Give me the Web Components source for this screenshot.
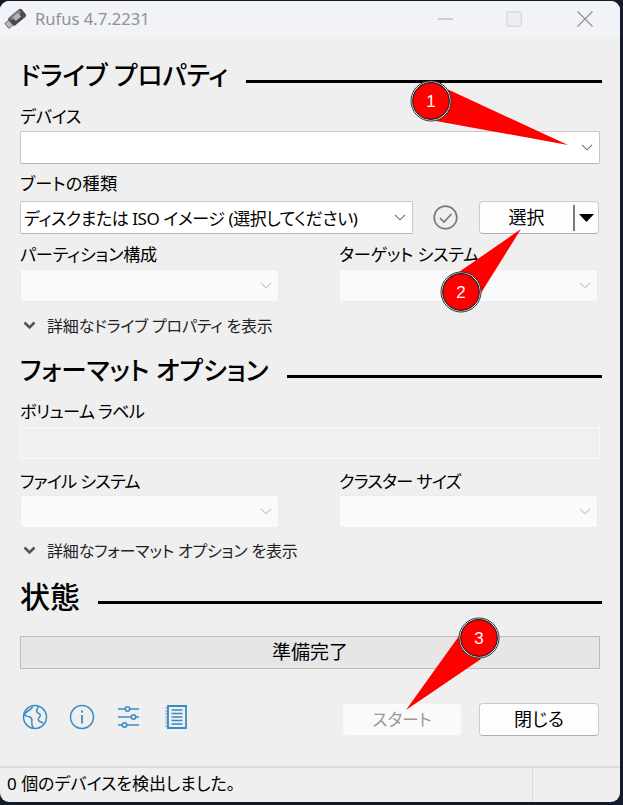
<!DOCTYPE html>
<html lang="ja">
<head>
<meta charset="utf-8">
<title>Rufus</title>
<style>
html, body { margin: 0; height: 100%; background: #141a2a; overflow: hidden; }
body { font-family: "Noto Sans", "Noto Sans CJK JP", sans-serif; font-feature-settings: "palt"; color: #000; }
</style>
</head>
<body>
<rufus-window>
  <title-bar slot="title">Rufus 4.7.2231</title-bar>

  <section-head style="--top:20px">ドライブ プロパティ</section-head>
  <field-label style="--top:10px;--gap:2px;--ls:-.4px">デバイス</field-label>
  <combo-box wide></combo-box>
  <field-label style="--top:8px;--gap:4px;--ls:.2px">ブートの種類</field-label>
  <boot-row></boot-row>
  <field-pair first="パーティション構成" second="ターゲット システム" style="--top:9px;--gap:2px;--ls:-.25px"></field-pair>
  <more-toggle style="--top:11px">詳細なドライブ プロパティ を表示</more-toggle>

  <section-head style="--top:15px">フォーマット オプション</section-head>
  <field-label style="--top:10px;--gap:0px;--ls:-.7px">ボリューム ラベル</field-label>
  <text-box></text-box>
  <field-pair first="ファイル システム" second="クラスター サイズ" style="--top:11px;--gap:1px;--ls:-.75px"></field-pair>
  <more-toggle style="--top:10px">詳細なフォーマット オプション を表示</more-toggle>

  <section-head big style="--top:16px">状態</section-head>
  <progress-bar>準備完了</progress-bar>
  <action-row></action-row>
  <status-bar slot="status">0 個のデバイスを検出しました。</status-bar>
</rufus-window>
<call-outs></call-outs>

<script>
const CHEVRON = `<svg width="12" height="7" viewBox="0 0 12 7"><path d="M1 .8 6 5.8 11 .8" fill="none" stroke="currentColor" stroke-width="1.1"/></svg>`;

class RufusWindow extends HTMLElement {
    constructor() {
        super();
        this.attachShadow({ mode: 'open' });
        this.shadowRoot.innerHTML = `
            <style>
            :host {
                display: flex;
                flex-direction: column;
                width: 620px;
                height: 801px;
                margin-top: 1px;
                background: #efefef;
                border-radius: 9px;
                overflow: hidden;
                box-sizing: border-box;
            }
            .body {
                flex: 1;
                display: flex;
                flex-direction: column;
                padding: 0 20px;
                min-height: 0;
            }
            </style>
            <slot name="title"></slot>
            <div class="body"><slot></slot></div>
            <slot name="status"></slot>
        `;
    }
}

class TitleBar extends HTMLElement {
    constructor() {
        super();
        this.attachShadow({ mode: 'open' });
        this.shadowRoot.innerHTML = `
            <style>
            :host {
                display: flex;
                align-items: center;
                box-sizing: border-box;
                height: 36px;
                padding-bottom: 1px;
                background: #f1f3f8;
                color: #8f9194;
                font-family: "Noto Sans", sans-serif;
                font-size: 16.6px;
                flex: none;
            }
            .logo { margin: 0 7px 0 3px; display: block; }
            .text { flex: 1; }
            .ctl { display: block; flex: none; }
            </style>
            <svg class="logo" width="25" height="24" viewBox="0 0 25 24">
                <g transform="translate(11.500 12.500) rotate(-40)">
                    <rect x="-10" y="-3.200" width="6" height="6.400" fill="#b9b9b9" stroke="#555" stroke-width=".8"/>
                    <rect x="-5" y="-5" width="17" height="10" rx="2" fill="#4b4b4b"/>
                    <rect x="-3" y="-5" width="13" height="4" rx="1" fill="#7d7d7d"/>
                    <rect x="0" y="-3" width="7" height="5" fill="#b4b4b4"/>
                </g>
            </svg>
            <span class="text"><slot></slot></span>
            <svg class="ctl" style="margin-right:53px" width="15" height="2" viewBox="0 0 15 2"><path d="M0 1h15" stroke="#a4a6a9" stroke-width="1"/></svg>
            <svg class="ctl" style="margin-right:55px" width="16" height="16" viewBox="0 0 16 16"><rect x=".7" y=".7" width="14.600" height="14.600" rx="2" fill="#eceef2" stroke="#d9dbde" stroke-width="1.400"/></svg>
            <svg class="ctl" style="margin-right:27px" width="16" height="16" viewBox="0 0 16 16"><path d="M.5.5l15 15M15.500.5l-15 15" stroke="#8e8f92" stroke-width="1.200"/></svg>
        `;
    }
}

class SectionHead extends HTMLElement {
    constructor() {
        super();
        this.attachShadow({ mode: 'open' });
        this.shadowRoot.innerHTML = `
            <style>
            :host {
                display: flex;
                align-items: center;
                gap: 18px;
                height: 38px;
                margin-top: var(--top, 0);
                margin-right: -2px;
                font-weight: 500;
                font-size: 25.6px;
                line-height: 38px;
                flex: none;
            }
            :host([big]) { font-size: 30px; }
            .rule { flex: 1; height: 3px; background: #000; margin-top: 10px; }
            </style>
            <span><slot></slot></span>
            <div class="rule"></div>
        `;
    }
}

class FieldLabel extends HTMLElement {
    constructor() {
        super();
        this.attachShadow({ mode: 'open' });
        this.shadowRoot.innerHTML = `
            <style>
            :host {
                display: block;
                height: 24px;
                line-height: 24px;
                margin-top: var(--top, 0);
                margin-bottom: var(--gap, 0);
                font-size: 17.2px;
                letter-spacing: var(--ls, 0);
                white-space: nowrap;
                flex: none;
            }
            </style>
            <slot></slot>
        `;
    }
}

class ComboBox extends HTMLElement {
    constructor() {
        super();
        this.attachShadow({ mode: 'open' });
        this.shadowRoot.innerHTML = `
            <style>
            :host {
                display: flex;
                align-items: center;
                box-sizing: border-box;
                height: 33px;
                padding: 0 6px 0 3px;
                background: #fff;
                border: 1px solid #c8c8c8;
                border-bottom-color: #b8b8b8;
                border-radius: 2px;
                font-size: 17px;
                letter-spacing: -.43px;
                color: #6f6f6f;
                flex: none;
            }
            :host([disabled]) {
                background: #fafafa;
                border-color: #ececec;
                color: #c4c4c4;
            }
            .value { flex: 1; color: #000; white-space: nowrap; overflow: hidden; }
            svg { display: block; flex: none; }
            </style>
            <span class="value"><slot></slot></span>
            ${CHEVRON}
        `;
    }
}

class BootRow extends HTMLElement {
    constructor() {
        super();
        this.attachShadow({ mode: 'open' });
        this.shadowRoot.innerHTML = `
            <style>
            :host { display: flex; align-items: center; height: 34px; flex: none; }
            combo-box { width: 393px; }
            .check { margin: 0 21px 0 20px; display: block; }
            </style>
            <combo-box>ディスクまたは ISO イメージ (選択してください)</combo-box>
            <svg class="check" width="25" height="25" viewBox="0 0 25 25">
                <circle cx="12.500" cy="12.500" r="11.300" fill="none" stroke="#7a7a7a" stroke-width="1.700"/>
                <path d="M7 13l4 4 7.500-8" fill="none" stroke="#7a7a7a" stroke-width="1.700"/>
            </svg>
            <app-button split>選択</app-button>
        `;
    }
}

class AppButton extends HTMLElement {
    constructor() {
        super();
        this.attachShadow({ mode: 'open' });
        this.shadowRoot.innerHTML = `
            <style>
            :host {
                display: flex;
                align-items: center;
                box-sizing: border-box;
                width: 120px;
                height: 33px;
                margin-top: 1px;
                background: #fdfdfd;
                border: 1px solid #cbcbcb;
                border-bottom-color: #b0b0b0;
                border-radius: 4px;
                font-size: 18px;
                flex: none;
            }
            :host([disabled]) {
                background: #fafafa;
                border-color: #f0f0f0;
                color: #9a9a9a;
                font-size: 16.8px;
            }
            .label { flex: 1; text-align: center; line-height: 31px; }
            .drop { display: none; align-items: center; height: 100%; }
            :host([split]) .drop { display: flex; }
            .bar { width: 2px; height: 26px; background: #7b7b7b; margin-right: 4px; }
            svg { display: block; margin-right: 4px; }
            </style>
            <span class="label"><slot></slot></span>
            <span class="drop"><span class="bar"></span><svg width="15" height="8" viewBox="0 0 15 8"><path d="M0 0h15L7.500 8z"/></svg></span>
        `;
    }
}

class FieldPair extends HTMLElement {
    constructor() {
        super();
        this.attachShadow({ mode: 'open' });
        this.shadowRoot.innerHTML = `
            <style>
            :host {
                display: grid;
                grid-template-columns: 259px 259px;
                column-gap: 60px;
                margin-top: var(--top, 0);
                flex: none;
            }
            field-label { --top: 0px; }
            </style>
            <div><field-label>${this.getAttribute('first')}</field-label><combo-box disabled></combo-box></div>
            <div><field-label>${this.getAttribute('second')}</field-label><combo-box disabled></combo-box></div>
        `;
    }
}

class MoreToggle extends HTMLElement {
    constructor() {
        super();
        this.attachShadow({ mode: 'open' });
        this.shadowRoot.innerHTML = `
            <style>
            :host {
                display: flex;
                align-items: center;
                gap: 11px;
                height: 24px;
                padding-left: 3px;
                margin-top: var(--top, 0);
                font-size: 16px;
                letter-spacing: -.18px;
                color: #222;
                white-space: nowrap;
                flex: none;
            }
            svg { display: block; flex: none; }
            </style>
            <svg width="13" height="9" viewBox="0 0 13 9"><path d="M1.500 1.500 6.500 6.500 11.500 1.500" fill="none" stroke="#555" stroke-width="2.600"/></svg>
            <span><slot></slot></span>
        `;
    }
}

class TextBox extends HTMLElement {
    constructor() {
        super();
        this.attachShadow({ mode: 'open' });
        this.shadowRoot.innerHTML = `
            <style>
            :host {
                display: block;
                box-sizing: border-box;
                height: 32px;
                margin-top: 3px;
                background: #f0f0f0;
                border: 1px solid #f9f9f9;
                flex: none;
            }
            </style>
        `;
    }
}

class ProgressBar extends HTMLElement {
    constructor() {
        super();
        this.attachShadow({ mode: 'open' });
        this.shadowRoot.innerHTML = `
            <style>
            :host {
                display: block;
                box-sizing: border-box;
                height: 33px;
                margin-top: 20px;
                background: #e6e6e6;
                border: 1px solid #bcbcbc;
                text-align: center;
                font-size: 19px;
                line-height: 30px;
                flex: none;
            }
            </style>
            <slot></slot>
        `;
    }
}

class ActionRow extends HTMLElement {
    constructor() {
        super();
        this.attachShadow({ mode: 'open' });
        this.shadowRoot.innerHTML = `
            <style>
            :host {
                display: flex;
                align-items: center;
                height: 33px;
                margin-top: 34px;
                flex: none;
            }
            .icons { flex: 1; display: flex; align-items: center; gap: 21px; padding: 0 0 5px 2px; color: #3a8cc4; }
            svg { display: block; }
            app-button { margin: 0; }
            .start { margin-right: 17px; }
            .close { margin-right: 1px; }
            </style>
            <div class="icons">
                <svg width="26" height="26" viewBox="0 0 26 26" fill="none" stroke="currentColor" stroke-width="1.500">
                    <circle cx="13" cy="13" r="11.500"/>
                    <path d="M10 2c.8 2-.6 3-2.500 4S3.500 8.500 2.500 11c1.500 1.800 3.500 1 5.500 2s2.200 3 1.800 5 .4 4 1.700 6M17 2.200c-1.300 2-3 3.300-2.300 5.300s3.100 1.500 3.600 3.500-2.800 2.500-2 5 3.700 1.500 4.700 3.500"/>
                </svg>
                <svg width="26" height="26" viewBox="0 0 26 26" fill="none" stroke="currentColor" stroke-width="1.500">
                    <circle cx="13" cy="13" r="11.500"/>
                    <path d="M13 11v8.500" stroke-width="1.800"/>
                    <path d="M13 6.500v2" stroke-width="2"/>
                </svg>
                <svg width="24" height="24" viewBox="0 0 24 24" fill="none" stroke="currentColor" stroke-width="1.600">
                    <path d="M2 4h7.500M13.500 4H23M2 12h13.500M19.500 12H23M2 20h4.500M10.500 20H23"/>
                    <circle cx="11.500" cy="4" r="2.200"/><circle cx="17.500" cy="12" r="2.200"/><circle cx="8.500" cy="20" r="2.200"/>
                </svg>
                <svg width="22" height="24" viewBox="0 0 22 24" fill="none" stroke="currentColor" stroke-width="1.500" style="margin-left:4px">
                    <path d="M3 1h18v22H3z" stroke-width="1.800"/>
                    <path d="M6.500 5h11M6.500 8.500h11M6.500 12h11M6.500 15.500h11M6.500 19h11"/>
                    <path d="M.5 3h3M.5 6h3M.5 9h3M.5 12h3M.5 15h3M.5 18h3M.5 21h3" stroke-width="1.100"/>
                </svg>
            </div>
            <app-button class="start" disabled>スタート</app-button>
            <app-button class="close">閉じる</app-button>
        `;
    }
}

class StatusBar extends HTMLElement {
    constructor() {
        super();
        this.attachShadow({ mode: 'open' });
        this.shadowRoot.innerHTML = `
            <style>
            :host {
                display: flex;
                box-sizing: border-box;
                height: 36px;
                border-top: 2px solid #dcdcdc;
                font-size: 17px;
                flex: none;
            }
            .text { flex: 1; padding-left: 7px; line-height: 32px; white-space: nowrap; }
            .cell { width: 87px; border-left: 1px solid #dcdcdc; }
            </style>
            <span class="text"><slot></slot></span>
            <div class="cell"></div>
        `;
    }
}

// red numbered pointers drawn over the window
class CallOuts extends HTMLElement {
    constructor() {
        super();
        this.attachShadow({ mode: 'open' });
        const pins = [
            { n: 1, x: 431, y: 101, tip: '568,145', a: '447,89', b: '436,121' },
            { n: 2, x: 461, y: 292, tip: '521,229', a: '459,272', b: '481,293' },
            { n: 3, x: 479, y: 638, tip: '406,710', a: '459,636', b: '481,659' }
        ];
        const drawn = pins.map((p) => `
            <polygon points="${p.a} ${p.tip} ${p.b}" fill="#f00"/>
            <circle cx="${p.x}" cy="${p.y}" r="20" fill="#fff" stroke="#333" stroke-width="1"/>
            <circle cx="${p.x}" cy="${p.y}" r="18.300" fill="#f00" stroke="#222" stroke-width="1.200"/>
            <text x="${p.x}" y="${p.y + 6}" text-anchor="middle" font-family="'Liberation Sans', sans-serif" font-size="17" fill="#fff">${p.n}</text>
        `).join('');
        this.shadowRoot.innerHTML = `
            <style>
            :host { position: absolute; left: 0; top: 0; width: 623px; height: 805px; pointer-events: none; }
            svg { display: block; }
            </style>
            <svg width="623" height="805" viewBox="0 0 623 805">${drawn}</svg>
        `;
    }
}

customElements.define('rufus-window', RufusWindow);
customElements.define('title-bar', TitleBar);
customElements.define('section-head', SectionHead);
customElements.define('field-label', FieldLabel);
customElements.define('combo-box', ComboBox);
customElements.define('app-button', AppButton);
customElements.define('boot-row', BootRow);
customElements.define('field-pair', FieldPair);
customElements.define('more-toggle', MoreToggle);
customElements.define('text-box', TextBox);
customElements.define('progress-bar', ProgressBar);
customElements.define('action-row', ActionRow);
customElements.define('status-bar', StatusBar);
customElements.define('call-outs', CallOuts);
</script>
</body>
</html>
